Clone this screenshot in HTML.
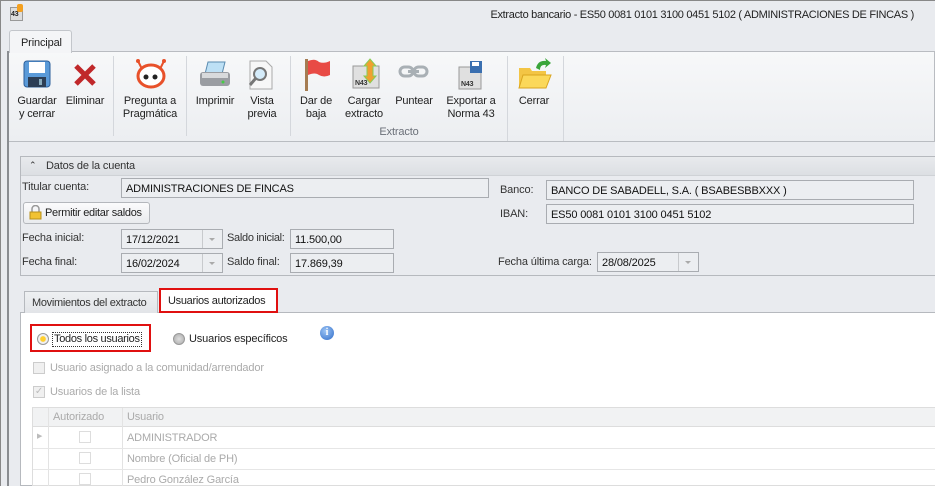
<!DOCTYPE html><html><head><style>
*{margin:0;padding:0;box-sizing:border-box}
body{width:935px;height:486px;overflow:hidden;background:#e9ebef;font-family:"Liberation Sans",sans-serif;font-size:11px;color:#1e1e1e;position:relative;letter-spacing:-0.15px}
.a{position:absolute;white-space:nowrap}
.lbl{position:absolute;font-size:11px;color:#333;white-space:nowrap}
.inp{position:absolute;background:#eceef1;border:1px solid #a9acb1;height:20px;padding:4px 0 0 4px;font-size:11px;color:#111;white-space:nowrap}
.dd{position:absolute;right:0;top:0;width:20px;height:18px;border-left:1px solid #c8cacd}
.dd:after{content:"";position:absolute;left:6px;top:8px;border:3px solid transparent;border-top:3px solid #aaa}
.btn{position:absolute;text-align:center;font-size:11px;line-height:13px;color:#222}
.sep{position:absolute;top:56px;width:1px;height:80px;background:#d4d7dc}
.gl{position:absolute;color:#aaa;font-size:11px;white-space:nowrap}
</style></head><body>
<div class="a" style="left:0;top:0;width:935px;height:1px;background:#888"></div>
<div class="a" style="left:0;top:0;width:1px;height:486px;background:#888"></div>
<div class="a" style="left:10px;top:7px;width:13px;height:14px;background:#ddd;border:1px solid #999;font-size:7px;font-weight:bold;padding-top:3px">43</div>
<div class="a" style="left:17px;top:4px;width:6px;height:8px;background:#f4a020;border-radius:2px"></div>
<div class="a" style="right:21px;top:9px;font-size:11px;color:#222;letter-spacing:-0.3px">Extracto bancario - ES50 0081 0101 3100 0451 5102 ( ADMINISTRACIONES DE FINCAS )</div>
<!-- ribbon -->
<div class="a" style="left:9px;top:30px;width:63px;height:23px;background:#f4f5f7;border:1px solid #c3c6cb;border-bottom:none;border-radius:3px 3px 0 0;padding:6px 0 0 11px;font-size:11px;z-index:2">Principal</div>
<div class="a" style="left:7px;top:51px;width:928px;height:91px;background:linear-gradient(#f7f8f9,#eceef1);border:1px solid #b9bcc1"></div>
<div class="a" style="left:7px;top:51px;width:2px;height:435px;background:#8a8d91"></div>
<div class="sep" style="left:113px"></div><div class="sep" style="left:186px"></div><div class="sep" style="left:290px"></div><div class="sep" style="left:507px;height:85px"></div><div class="sep" style="left:563px;height:85px"></div>
<!-- icons -->
<svg class="a" style="left:23px;top:60px" width="30" height="30"><rect x="1" y="1" width="26" height="26" rx="3" fill="#5a9ad8" stroke="#2c5f9a"/><rect x="6" y="2" width="16" height="11" fill="#fff"/><rect x="5" y="17" width="18" height="10" fill="#2c3e55"/><rect x="16" y="19" width="3" height="6" fill="#8ab"/></svg>
<svg class="a" style="left:73px;top:61px" width="26" height="26"><path d="M3 5 L21 23 M21 5 L3 23" stroke="#c0282a" stroke-width="5"/></svg>
<svg class="a" style="left:134px;top:58px" width="34" height="32"><circle cx="4" cy="3" r="2" fill="#e8512a"/><circle cx="30" cy="3" r="2" fill="#e8512a"/><path d="M4 3 L8 11 M30 3 L26 11" stroke="#e8512a" stroke-width="2"/><ellipse cx="17" cy="18" rx="13" ry="11" fill="#fff" stroke="#e8512a" stroke-width="3"/><circle cx="12" cy="19" r="2.5" fill="#222"/><circle cx="21" cy="19" r="2.5" fill="#222"/></svg>
<svg class="a" style="left:199px;top:60px" width="32" height="30"><path d="M9 2 L26 2 L23 14 L6 14Z" fill="#bde0f5" stroke="#5a8bb0"/><rect x="1" y="12" width="30" height="14" rx="3" fill="#9a9da2"/><rect x="3" y="13" width="26" height="5" fill="#d8dadc"/><circle cx="24" cy="22" r="1.5" fill="#4c4"/></svg>
<svg class="a" style="left:247px;top:60px" width="28" height="30"><path d="M3 1 L19 1 L25 7 L25 29 L3 29Z" fill="#f7f7f7" stroke="#aaa"/><circle cx="13" cy="14" r="6" fill="#d5ecfa" stroke="#777" stroke-width="2"/><path d="M9 18 L3 25" stroke="#777" stroke-width="3"/></svg>
<svg class="a" style="left:303px;top:58px" width="28" height="34"><rect x="2" y="1" width="3" height="32" fill="#a57c52"/><path d="M5 3 Q12 0 16 4 Q21 6 27 3 L27 17 Q21 20 16 17 Q12 14 5 17Z" fill="#e84b45"/></svg>
<svg class="a" style="left:352px;top:58px" width="30" height="32"><rect x="1" y="8" width="26" height="22" fill="#e0e0e0" stroke="#999"/><text x="3" y="27" font-size="7" font-family="Liberation Sans" font-weight="bold" fill="#333">N43</text><path d="M18 1 L24 8 L21 8 L21 18 L24 18 L18 25 L12 18 L15 18 L15 8 L12 8Z" fill="#f0a030" stroke="#8c5" stroke-width="1"/></svg>
<svg class="a" style="left:398px;top:64px" width="32" height="16"><rect x="2" y="3" width="13" height="9" rx="4.5" fill="none" stroke="#a9b0b5" stroke-width="3"/><rect x="16" y="3" width="13" height="9" rx="4.5" fill="none" stroke="#a9b0b5" stroke-width="3"/><rect x="10" y="6" width="11" height="3" fill="#a9b0b5"/></svg>
<svg class="a" style="left:458px;top:60px" width="30" height="30"><rect x="1" y="7" width="22" height="22" fill="#e0e0e0" stroke="#999"/><text x="3" y="26" font-size="7" font-family="Liberation Sans" font-weight="bold" fill="#333">N43</text><rect x="12" y="1" width="12" height="12" fill="#3a6fb0"/><rect x="14" y="2" width="7" height="4" fill="#fff"/></svg>
<svg class="a" style="left:518px;top:58px" width="34" height="32"><path d="M1 10 L12 10 L14 13 L28 13 L28 30 L1 30Z" fill="#f3c545"/><path d="M5 17 L33 17 L28 30 L1 30Z" fill="#fbd85a" stroke="#d9a520"/><path d="M18 10 Q20 2 28 3 L27 0 L33 5 L27 10 L28 7 Q22 6 22 12Z" fill="#3aa53a"/></svg>
<div class="btn" style="left:14px;top:95px;width:46px">Guardar<br>y cerrar</div>
<div class="btn" style="left:63px;top:95px;width:44px">Eliminar</div>
<div class="btn" style="left:118px;top:95px;width:64px">Pregunta a<br>Pragmática</div>
<div class="btn" style="left:193px;top:95px;width:44px">Imprimir</div>
<div class="btn" style="left:240px;top:95px;width:44px">Vista<br>previa</div>
<div class="btn" style="left:295px;top:95px;width:42px">Dar de<br>baja</div>
<div class="btn" style="left:340px;top:95px;width:48px">Cargar<br>extracto</div>
<div class="btn" style="left:390px;top:95px;width:48px">Puntear</div>
<div class="btn" style="left:441px;top:95px;width:60px">Exportar a<br>Norma 43</div>
<div class="btn" style="left:512px;top:95px;width:44px">Cerrar</div>
<div class="btn" style="left:370px;top:126px;width:58px;color:#6a6f78">Extracto</div>
<!-- datos -->
<div class="a" style="left:20px;top:156px;width:915px;height:120px;border:1px solid #b6b9be;border-right:none"></div>
<div class="a" style="left:21px;top:157px;width:914px;height:19px;background:linear-gradient(#e8eaed,#dcdfe3);border-bottom:1px solid #cfd2d6"></div>
<div class="lbl" style="left:29px;top:160px;font-size:9px">&#8963;</div>
<div class="lbl" style="left:46px;top:160px">Datos de la cuenta</div>
<div class="lbl" style="left:22px;top:181px">Titular cuenta:</div>
<div class="inp" style="left:121px;top:178px;width:368px">ADMINISTRACIONES DE FINCAS</div>
<div class="lbl" style="left:500px;top:184px">Banco:</div>
<div class="inp" style="left:546px;top:180px;width:368px">BANCO DE SABADELL, S.A. ( BSABESBBXXX )</div>
<div class="lbl" style="left:500px;top:208px">IBAN:</div>
<div class="inp" style="left:546px;top:204px;width:368px">ES50 0081 0101 3100 0451 5102</div>
<div class="a" style="left:23px;top:202px;width:127px;height:22px;border:1px solid #b4b7bc;border-radius:3px;background:linear-gradient(#fbfbfc,#e9ebee);padding:4px 0 0 21px;font-size:11px;letter-spacing:-0.3px">Permitir editar saldos</div>
<svg class="a" style="left:29px;top:205px" width="13" height="15"><path d="M3 7 V4 a3.5 3.5 0 0 1 7 0 V7" fill="none" stroke="#999" stroke-width="1.5"/><rect x="1" y="7" width="11" height="7" fill="#f1c232" stroke="#b8901a"/></svg>
<div class="lbl" style="left:22px;top:232px">Fecha inicial:</div>
<div class="inp" style="left:121px;top:229px;width:102px">17/12/2021<div class="dd"></div></div>
<div class="lbl" style="left:227px;top:232px;letter-spacing:-0.3px">Saldo inicial:</div>
<div class="inp" style="left:290px;top:229px;width:104px">11.500,00</div>
<div class="lbl" style="left:22px;top:256px">Fecha final:</div>
<div class="inp" style="left:121px;top:253px;width:102px">16/02/2024<div class="dd"></div></div>
<div class="lbl" style="left:227px;top:256px">Saldo final:</div>
<div class="inp" style="left:290px;top:253px;width:104px">17.869,39</div>
<div class="lbl" style="left:498px;top:256px">Fecha última carga:</div>
<div class="inp" style="left:597px;top:252px;width:102px">28/08/2025<div class="dd"></div></div>
<!-- tabs -->
<div class="a" style="left:20px;top:312px;width:915px;height:174px;background:#fff;border:1px solid #b6b9be;border-right:none"></div>
<div class="a" style="left:24px;top:291px;width:134px;height:22px;background:linear-gradient(#eef0f2,#e2e4e8);border:1px solid #b6b9be;border-bottom:none;padding:5px 0 0 7px;color:#333;letter-spacing:-0.3px">Movimientos del extracto</div>
<div class="a" style="left:159px;top:288px;width:119px;height:25px;background:#fff;border:2px solid #e01010;padding:5px 0 0 7px;letter-spacing:-0.3px">Usuarios autorizados</div>
<div class="a" style="left:30px;top:324px;width:121px;height:28px;border:2px solid #e01010"></div>
<div class="a" style="left:37px;top:333px;width:12px;height:12px;border-radius:50%;border:1px solid #999;background:radial-gradient(#ffcf30 35%,#f0f0f0 45%)"></div>
<div class="a" style="left:52px;top:332px;border:1px dotted #333;padding:0 1px;line-height:13px;letter-spacing:-0.3px">Todos los usuarios</div>
<div class="a" style="left:173px;top:333px;width:12px;height:12px;border-radius:50%;border:1px solid #999;background:radial-gradient(#ddd,#aaa)"></div>
<div class="a" style="left:189px;top:333px;line-height:13px">Usuarios específicos</div>
<div class="a" style="left:320px;top:326px;width:14px;height:14px;border-radius:50%;background:radial-gradient(circle at 40% 35%,#9cc4f5,#2f6cc8);color:#fff;font-weight:bold;font-size:10px;text-align:center;line-height:14px;font-family:'Liberation Serif',serif">i</div>
<div class="a" style="left:33px;top:362px;width:12px;height:12px;border:1px solid #ccc;background:#f0f0f0"></div>
<div class="gl" style="left:50px;top:362px">Usuario asignado a la comunidad/arrendador</div>
<div class="a" style="left:33px;top:386px;width:12px;height:12px;border:1px solid #ccc;background:#f0f0f0;color:#bbb;font-size:10px;line-height:10px;text-align:center">✓</div>
<div class="gl" style="left:50px;top:386px">Usuarios de la lista</div>
<div class="a" style="left:32px;top:407px;width:903px;height:79px;border:1px solid #ddd;border-right:none;background:#fff"></div>
<div class="a" style="left:33px;top:408px;width:902px;height:19px;background:#f1f2f3;border-bottom:1px solid #ddd"></div>
<div class="a" style="left:48px;top:408px;width:1px;height:78px;background:#e3e3e3"></div>
<div class="a" style="left:122px;top:408px;width:1px;height:78px;background:#e3e3e3"></div>
<div class="gl" style="left:53px;top:411px">Autorizado</div>
<div class="gl" style="left:127px;top:411px">Usuario</div>
<div class="a" style="left:33px;top:448px;width:902px;height:1px;background:#e6e6e6"></div>
<div class="a" style="left:33px;top:469px;width:902px;height:1px;background:#e6e6e6"></div>
<div class="gl" style="left:37px;top:432px;font-size:7px;color:#bbb">▶</div>
<div class="a" style="left:79px;top:431px;width:12px;height:12px;border:1px solid #ddd"></div>
<div class="a" style="left:79px;top:452px;width:12px;height:12px;border:1px solid #ddd"></div>
<div class="a" style="left:79px;top:473px;width:12px;height:12px;border:1px solid #ddd"></div>
<div class="gl" style="left:127px;top:432px">ADMINISTRADOR</div>
<div class="gl" style="left:127px;top:453px">Nombre (Oficial de PH)</div>
<div class="gl" style="left:127px;top:474px">Pedro González García</div>
</body></html>
